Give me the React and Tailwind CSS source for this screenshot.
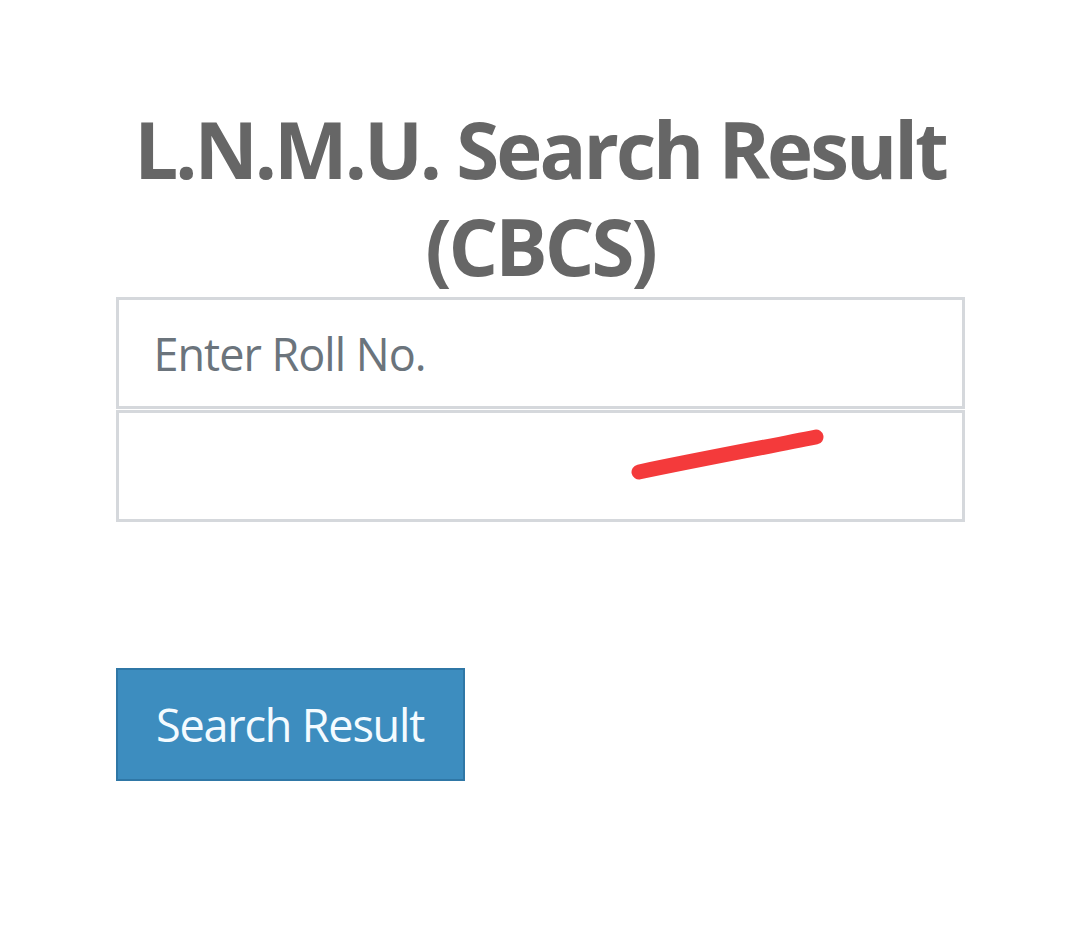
import React from 'react';

const App = () => {
  return (
    <div className="min-h-screen bg-white font-['Open_Sans',sans-serif]">
      <div className="w-[849px] mx-auto pt-[101px]">
        <h1 className="text-center font-bold text-[#666666] text-[78px] leading-[97px] tracking-[-3px] whitespace-nowrap">
          <span className="block">L.N.M.U. Search Result</span>
          <span className="block">(CBCS)</span>
        </h1>
        <div className="mt-[2px] relative">
          <input
            type="text"
            placeholder="Enter Roll No."
            className="block w-full h-[112px] border-[3px] border-[#d5d8dc] px-[35px] text-[45px] tracking-[-1px] text-[#495057] placeholder:text-[#6b747c] outline-none"
          />
          <input
            type="text"
            className="block w-full h-[112px] mt-[1px] border-[3px] border-[#d5d8dc] px-[35px] text-[45px] outline-none"
          />
          <svg className="absolute left-[505px] top-[124px]" width="215" height="60" viewBox="0 0 215 60">
            <path d="M18 51 C 80 38, 140 27, 195 16" stroke="#f43a3b" strokeWidth="15" strokeLinecap="round" fill="none" />
          </svg>
        </div>
        <button className="mt-[146px] w-[349px] h-[113px] bg-[#3d8dbf] border-2 border-[#2f77a6] text-[#f4fbff] text-[45px] tracking-[-1.2px] text-center">
          Search Result
        </button>
      </div>
    </div>
  );
};

export default App;
